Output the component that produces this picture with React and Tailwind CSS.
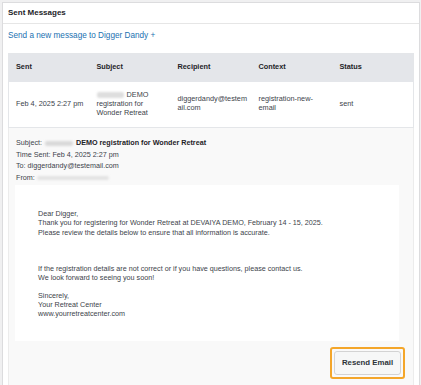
import React from 'react';

const font = { fontFamily: '"Liberation Sans", Arial, sans-serif' };

const Blur = ({ className }) => (
  <span className={`inline-block align-middle rounded-[2px] blur-[0.8px] ${className}`} />
);

const App = () => {
  return (
    <div className="min-h-[385px] bg-[#f0f0f1] pt-[2px] overflow-hidden" style={font}>
      <div className="ml-[2px] w-[418px] border border-[#dcdcde] bg-white text-[#1d2327]">
        {/* header */}
        <div className="h-[21px] border-b border-[#e6e6e6] px-[5px] flex items-center">
          <h2 className="text-[8px] font-semibold leading-none">Sent Messages</h2>
        </div>

        <div className="px-[5px]">
          <a href="#" className="block mt-[6px] text-[8.2px] leading-[12px] text-[#2271b1]">
            Send a new message to Digger Dandy +
          </a>

          {/* table */}
          <table className="mt-[11px] w-full table-fixed border-collapse border border-[#e4e6e9] text-[7.3px] text-[#3c434a]">
            <thead>
              <tr className="h-[28px] bg-[#e4e6ea] text-left text-[#1d2327]">
                <th className="pl-[7px] font-bold">Sent</th>
                <th className="pl-[7px] font-bold">Subject</th>
                <th className="pl-[7px] font-bold">Recipient</th>
                <th className="pl-[7px] font-bold">Context</th>
                <th className="pl-[7px] font-bold">Status</th>
              </tr>
            </thead>
            <tbody>
              <tr className="h-[46px] leading-[8.8px] align-middle">
                <td className="pl-[7px]">Feb 4, 2025 2:27 pm</td>
                <td className="pl-[7px] pr-[4px]">
                  <Blur className="w-[27px] h-[6px] bg-[#dedede] mr-[3px]" />
                  {'DEMO registration for Wonder Retreat'}
                </td>
                <td className="pl-[7px] pr-[2px] break-all">diggerdandy@testemail.com</td>
                <td className="pl-[7px] pr-[6px]">registration-new-email</td>
                <td className="pl-[7px]">sent</td>
              </tr>
            </tbody>
          </table>

          {/* details */}
          <div className="bg-[#f9f9f9] border-x border-[#ececec] pl-[7px] pr-[8px] pt-[9px] pb-[12px] text-[7.2px] text-[#3c434a]">
            <div className="leading-[11.5px]">
              <div>
                Subject: <Blur className="w-[28px] h-[5px] bg-[#d9d9d9] mx-[1px]" />{' '}
                <span className="font-bold text-[#1d2327]">DEMO registration for Wonder Retreat</span>
              </div>
              <div>Time Sent: Feb 4, 2025 2:27 pm</div>
              <div>To: diggerdandy@testemail.com</div>
              <div>
                From: <Blur className="w-[72px] h-[4px] bg-[#e3e3e3]" />
              </div>
            </div>

            <div className="mt-[2px] -ml-px mr-[6px] bg-white pl-[23px] pt-[24px] pb-[22px] leading-[9.3px]">
              <p>Dear Digger,</p>
              <p>Thank you for registering for Wonder Retreat at DEVAIYA DEMO, February 14 - 15, 2025.</p>
              <p>Please review the details below to ensure that all information is accurate.</p>
              <p className="mt-[26.7px]">If the registration details are not correct or if you have questions, please contact us.</p>
              <p>We look forward to seeing you soon!</p>
              <p className="mt-[8.7px]">Sincerely,</p>
              <p>Your Retreat Center</p>
              <p>www.yourretreatcenter.com</p>
            </div>

            <div className="mt-[6px] flex justify-end">
              <span className="rounded-[3px] border-2 border-[#f4a62a] p-[2px]">
                <button className="w-[67px] h-[24px] rounded-[3px] border border-[#d3d3d3] bg-[#f6f7f7] text-[7.8px] font-semibold text-[#2c3338]">
                  Resend Email
                </button>
              </span>
            </div>
          </div>
        </div>
      </div>
    </div>
  );
};

export default App;
